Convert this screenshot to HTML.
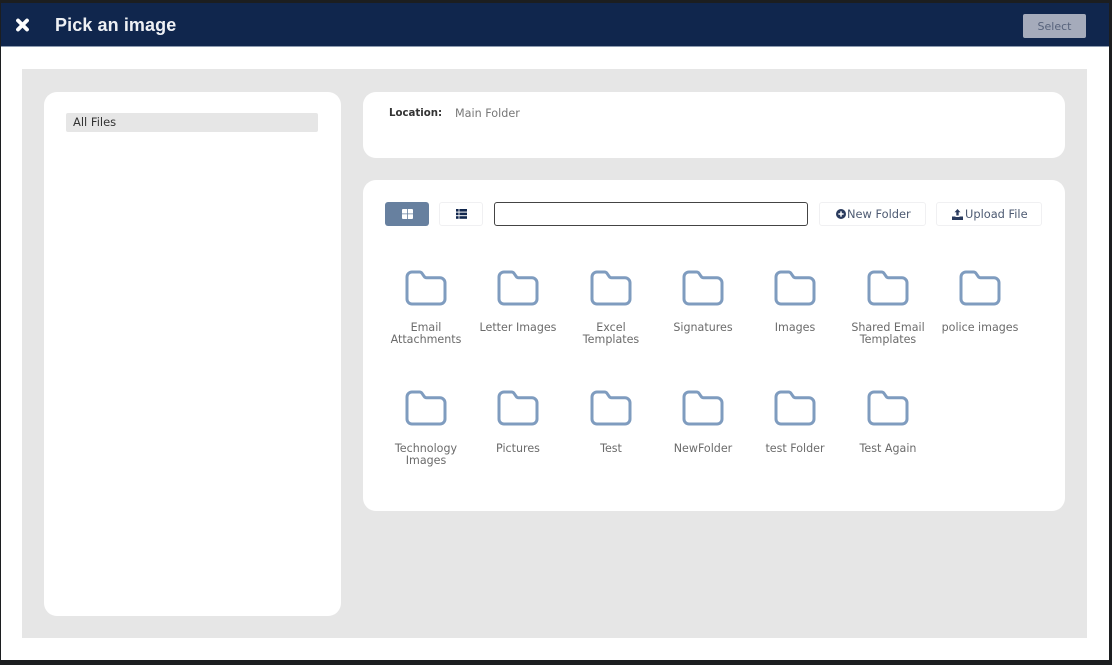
<!DOCTYPE html>
<html><head><meta charset="utf-8"><style>
html,body{margin:0;padding:0;width:1112px;height:665px;overflow:hidden;background:#1c1e20;font-family:"DejaVu Sans","Liberation Sans",sans-serif}
#p{position:absolute;left:0;top:0;width:1112px;height:665px;filter:blur(.35px)}
.a{position:absolute}
.card{position:absolute;background:#fff;border-radius:13px}
.btn{position:absolute;box-sizing:border-box;background:#fff;border:1px solid #f0f0f2;border-radius:3px;color:#4d5a72;font-size:11.4px;line-height:22px;height:24px;top:202px;white-space:nowrap}
.f{position:absolute;width:90px;text-align:center;font-size:11.1px;line-height:12px;color:#6b6b6b}
.f svg{position:absolute;left:24px;top:-52px}
.f span{position:absolute;left:-10px;width:110px;top:0;display:block}
</style></head><body><div id="p">
<svg width="0" height="0" style="position:absolute"><symbol id="fd" viewBox="0 0 42 36"><path d="M2 7a5 5 0 0 1 5-5h7.500a3 3 0 0 1 2.400 1.200l2.300 3.300a3 3 0 0 0 2.400 1.300H35a5 5 0 0 1 5 5V29a5 5 0 0 1-5 5H7a5 5 0 0 1-5-5z" fill="none" stroke="#7f9cbf" stroke-width="3"/></symbol></svg>
<div class="a" style="left:1px;top:3px;width:1108px;height:657px;background:#fff"></div>
<div class="a" style="left:1px;top:3px;width:1108px;height:43px;background:#10264d;border-bottom:1px solid #8d9bb0"></div>
<svg class="a" style="left:16px;top:18px" width="13" height="14" viewBox="0 0 13 14"><path d="M2 2.500L11 11.500M11 2.500L2 11.500" stroke="#fff" stroke-width="3.800" stroke-linecap="round"/></svg>
<div class="a" style="left:55px;top:14px;font-family:'Liberation Sans',sans-serif;font-size:18px;font-weight:700;line-height:22px;color:#eef0f4;letter-spacing:.1px">Pick an image</div>
<div class="a" style="left:1023px;top:14px;width:63px;height:24px;background:#a5abbb;border-radius:2px;color:#56627b;font-size:11px;line-height:26px;text-align:center">Select</div>

<div class="a" style="left:22px;top:69px;width:1065px;height:569px;background:#e6e6e6"></div>
<div class="card" style="left:44px;top:92px;width:297px;height:524px"></div>
<div class="a" style="left:66px;top:113px;width:252px;height:19px;background:#e6e6e6;border-radius:2px"></div>
<div class="a" style="left:73px;top:115px;font-size:11.500px;line-height:15px;color:#333">All Files</div>

<div class="card" style="left:363px;top:92px;width:702px;height:66px"></div>
<div class="a" style="left:389px;top:106px;font-size:10.200px;font-weight:700;line-height:15px;color:#333">Location:</div>
<div class="a" style="left:455px;top:106px;font-size:11.200px;line-height:15px;color:#777">Main Folder</div>

<div class="card" style="left:363px;top:180px;width:702px;height:331px"></div>
<div class="a" style="left:385px;top:202px;width:44px;height:24px;background:#67809f;border-radius:3px"></div>
<svg class="a" style="left:402px;top:209px" width="11" height="10" viewBox="0 0 11 10"><path d="M0 1a1 1 0 0 1 1-1h4v4.500H0zM5.800 0H10a1 1 0 0 1 1 1v3.500H5.800zM0 5.300h5V10H1a1 1 0 0 1-1-1zM5.800 5.300H11V9a1 1 0 0 1-1 1H5.800z" fill="#fff"/></svg>
<div class="btn" style="left:439px;width:44px"></div>
<svg class="a" style="left:456px;top:209px" width="11" height="10" viewBox="0 0 11 10" fill="#10264d"><rect x="0" y="0" width="2.600" height="2.600"/><rect x="3.400" y="0" width="7.600" height="2.600"/><rect x="0" y="3.600" width="2.600" height="2.600"/><rect x="3.400" y="3.600" width="7.600" height="2.600"/><rect x="0" y="7.200" width="2.600" height="2.600"/><rect x="3.400" y="7.200" width="7.600" height="2.600"/></svg>
<div class="a" style="left:494px;top:202px;width:312px;height:22px;border:1px solid #444;border-radius:3px;background:#fff"></div>

<div class="btn" style="left:819px;width:107px;padding-left:27px">New Folder</div>
<svg class="a" style="left:836px;top:209px" width="10" height="10" viewBox="0 0 10 10"><circle cx="5" cy="5" r="5" fill="#2a3b5e"/><path d="M5 2.400V7.600M2.400 5H7.600" stroke="#fff" stroke-width="1.500"/></svg>
<div class="btn" style="left:936px;width:106px;padding-left:28px">Upload File</div>
<svg class="a" style="left:952px;top:209px" width="11" height="11" viewBox="0 0 11 11" fill="#2a3b5e"><path d="M5.500 0L8.500 3.200H6.700V6.500H4.300V3.200H2.500z"/><path d="M0 7.500H3.500V8H7.500V7.500H11V11H0z"/></svg>

<div class="f" style="left:381px;top:322px"><svg width="42" height="36"><use href="#fd"/></svg><span>Email<br>Attachments</span></div>
<div class="f" style="left:473px;top:322px"><svg width="42" height="36"><use href="#fd"/></svg><span>Letter Images</span></div>
<div class="f" style="left:566px;top:322px"><svg width="42" height="36"><use href="#fd"/></svg><span>Excel<br>Templates</span></div>
<div class="f" style="left:658px;top:322px"><svg width="42" height="36"><use href="#fd"/></svg><span>Signatures</span></div>
<div class="f" style="left:750px;top:322px"><svg width="42" height="36"><use href="#fd"/></svg><span>Images</span></div>
<div class="f" style="left:843px;top:322px"><svg width="42" height="36"><use href="#fd"/></svg><span>Shared Email<br>Templates</span></div>
<div class="f" style="left:935px;top:322px"><svg width="42" height="36"><use href="#fd"/></svg><span>police images</span></div>

<div class="f" style="left:381px;top:443px"><svg style="top:-53px" width="42" height="36"><use href="#fd"/></svg><span>Technology<br>Images</span></div>
<div class="f" style="left:473px;top:443px"><svg style="top:-53px" width="42" height="36"><use href="#fd"/></svg><span>Pictures</span></div>
<div class="f" style="left:566px;top:443px"><svg style="top:-53px" width="42" height="36"><use href="#fd"/></svg><span>Test</span></div>
<div class="f" style="left:658px;top:443px"><svg style="top:-53px" width="42" height="36"><use href="#fd"/></svg><span>NewFolder</span></div>
<div class="f" style="left:750px;top:443px"><svg style="top:-53px" width="42" height="36"><use href="#fd"/></svg><span>test Folder</span></div>
<div class="f" style="left:843px;top:443px"><svg style="top:-53px" width="42" height="36"><use href="#fd"/></svg><span>Test Again</span></div>
</div></body></html>
